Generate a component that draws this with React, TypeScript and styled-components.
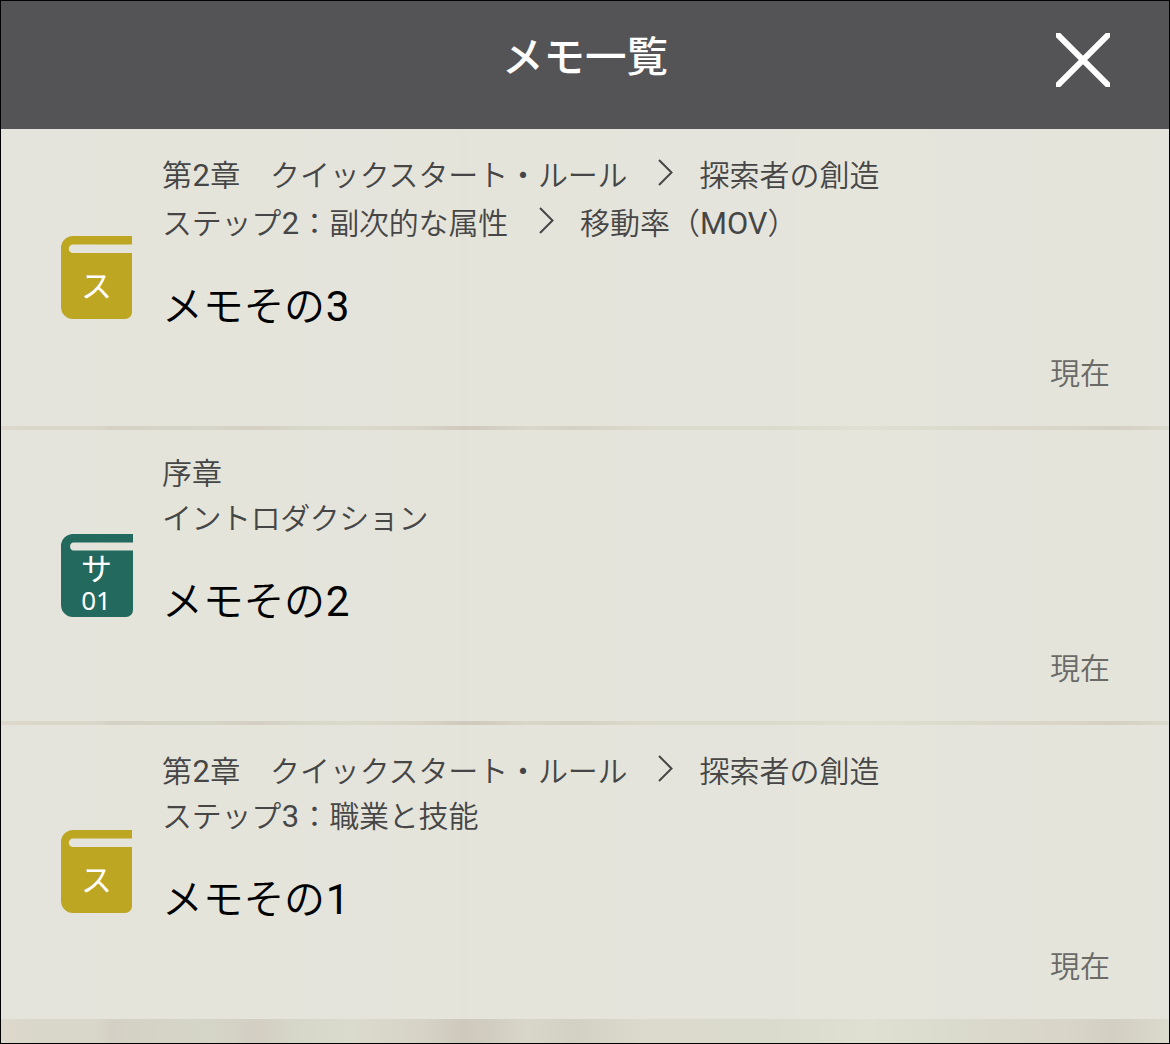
import React from "react";
import styled, { createGlobalStyle } from "styled-components";

interface Memo {
  id: number;
  book: "starter" | "supplement";
  path: string[][];
  title: string;
  time: string;
}

const memos: Memo[] = [
  {
    id: 3,
    book: "starter",
    path: [
      ["第2章　クイックスタート・ルール", "探索者の創造"],
      ["ステップ2：副次的な属性", "移動率（MOV）"],
    ],
    title: "メモその3",
    time: "現在",
  },
  {
    id: 2,
    book: "supplement",
    path: [["序章"], ["イントロダクション"]],
    title: "メモその2",
    time: "現在",
  },
  {
    id: 1,
    book: "starter",
    path: [
      ["第2章　クイックスタート・ルール", "探索者の創造"],
      ["ステップ3：職業と技能"],
    ],
    title: "メモその1",
    time: "現在",
  },
];

const tracking = (text: string) => {
  if (/^[ァ-ー]+$/.test(text)) return -0.45;
  if (/^[ァ-ー]/.test(text)) return -0.22;
  return /[ァ-ー]/.test(text) ? -0.14 : 0;
};

// digits and latin letters use their own face inside japanese text
function MixedText({ text }: { text: string }) {
  return (
    <>
      {text.split(/([0-9A-Z]+)/).map((part, i) =>
        i % 2 === 1 ? (
          <Latin key={i} $digits={/\d/.test(part)}>
            {part}
          </Latin>
        ) : (
          part
        )
      )}
    </>
  );
}

function BookIcon({ book }: { book: Memo["book"] }) {
  const isStarter = book === "starter";
  return (
    <Book viewBox="0 0 72 83">
      <path
        d={
          isStarter
            ? "M12 0H71V8.5H12A4.2 4.2 0 0 0 12 17H71V76A7 7 0 0 1 64 83H12A12 12 0 0 1 0 71V12A12 12 0 0 1 12 0Z"
            : "M12 0H72V8.5H12A4.2 4.2 0 0 0 12 16.5H72V76A7 7 0 0 1 65 83H12A12 12 0 0 1 0 71V12A12 12 0 0 1 12 0Z"
        }
        fill={isStarter ? "#bda622" : "#23695e"}
      />
      {isStarter ? (
        <BookLabel x="35.5" y="61" $size={31}>ス</BookLabel>
      ) : (
        <BookLabel x="35.5" y="46" $size={31}>
          サ
          <BookNumber x="35" y="76">01</BookNumber>
        </BookLabel>
      )}
    </Book>
  );
}

export default function App() {
  return (
    <Screen>
      <GlobalStyle />
      <Header>
        <Title>メモ一覧</Title>
        <CloseButton aria-label="閉じる">
          <svg width="54" height="54" viewBox="0 0 54 54">
            <path d="M0 0L54 54M54 0L0 54" stroke="#fff" strokeWidth="6" />
          </svg>
        </CloseButton>
      </Header>
      <List>
        {memos.map((memo) => (
          <Item key={memo.id}>
            <BookIcon book={memo.book} />
            <Body>
              {memo.path.map((line) => (
                <PathLine key={line[0]} $nested={line.length > 1}>
                  {line.map((part, i) => (
                    <React.Fragment key={part}>
                      {i > 0 && (
                        <Chevron viewBox="0 0 15 27">
                          <path d="M1 1L13.5 13.5L1 26" />
                        </Chevron>
                      )}
                      <PathPart $tracking={tracking(part)}>
                        <MixedText text={part} />
                      </PathPart>
                    </React.Fragment>
                  ))}
                </PathLine>
              ))}
              <MemoTitle>
                <MixedText text={memo.title} />
              </MemoTitle>
              <Time>{memo.time}</Time>
            </Body>
          </Item>
        ))}
      </List>
    </Screen>
  );
}

const GlobalStyle = createGlobalStyle`
  * {
    box-sizing: border-box;
  }
  body {
    margin: 0;
    font-family: Inter, "Noto Sans CJK JP", sans-serif;
  }
`;

const Screen = styled.div`
  display: flex;
  flex-direction: column;
  width: 1170px;
  height: 1044px;
  overflow: hidden;
  border: 1px solid #000;
  background: linear-gradient(
    90deg,
    #ddd8cb 0%,
    #d8d7ca 4%,
    #d8d7ca 8%,
    #d5d0c5 9.5%,
    #d4d3c6 12%,
    #d5d5c8 18%,
    #d4cec3 22%,
    #d6d6c9 25%,
    #dadacd 30%,
    #d7d4c7 36%,
    #cfc9bd 39.5%,
    #d2cdc1 42%,
    #d8d7c9 45%,
    #d3d1c4 49%,
    #dbdacd 55%,
    #dadacd 66%,
    #dfe0d2 74%,
    #dadacd 82%,
    #d9d4c8 92%,
    #d3cfc2 95%,
    #dadacd 100%
  );
`;

const Header = styled.header`
  display: grid;
  grid-template-columns: 1fr auto 1fr;
  height: 128px;
  padding: 32px 59px 0;
  background: #545456;
  color: #fff;
`;

const Title = styled.h1`
  grid-column: 2;
  margin: 0;
  font-size: 41.5px;
  font-weight: 500;
  line-height: 48px;
`;

const CloseButton = styled.button`
  justify-self: end;
  width: 54px;
  height: 54px;
  padding: 0;
  border: 0;
  background: none;

  svg {
    display: block;
  }
`;

const List = styled.div`
  display: flex;
  flex-direction: column;
  gap: 4px;
`;

const Item = styled.article`
  display: flex;
  align-items: center;
  padding: 20px 59px 0 60px;
  background: rgba(229, 229, 220, 0.95);
`;

const Book = styled.svg`
  flex: none;
  width: 72px;
  height: 83px;
  margin: -20.5px 29px 0 0;
`;

const BookLabel = styled.text<{ $size: number }>`
  fill: #fff;
  font-family: "Noto Sans CJK JP", sans-serif;
  font-size: ${({ $size }) => $size}px;
  text-anchor: middle;
`;

const BookNumber = styled.tspan`
  font-family: "Noto Sans", sans-serif;
  font-size: 26px;
  font-weight: 400;
`;

const Body = styled.div`
  flex: 1;
  padding-top: 1px;
`;

const PathLine = styled.div<{ $nested: boolean }>`
  display: flex;
  align-items: center;
  height: ${({ $nested }) => ($nested ? 48 : 45)}px;
  padding-top: ${({ $nested }) => ($nested ? 3 : 0)}px;
  color: #464646;
  font-size: 30px;
  font-weight: 350;
  line-height: 45px;
  white-space: nowrap;
`;

const PathPart = styled.span<{ $tracking: number }>`
  letter-spacing: ${({ $tracking }) => $tracking}px;
`;

const Latin = styled.span<{ $digits: boolean }>`
  margin: 0 ${({ $digits }) => ($digits ? "0.02em" : 0)};
  font-family: Roboto, sans-serif;
  font-size: 1.03em;
  font-weight: 400;
  line-height: 1;
`;

const Chevron = styled.svg`
  width: 15px;
  height: 27px;
  margin: -6px 26px 0 31px;
  fill: none;
  stroke: #464646;
  stroke-width: 2;
`;

const MemoTitle = styled.h2`
  height: 63px;
  margin: 28px 0 0;
  color: #000;
  font-size: 41px;
  font-weight: 350;
  letter-spacing: -0.3px;
  line-height: 64px;
`;

const Time = styled.time`
  display: block;
  margin-top: 13px;
  height: 76px;
  color: #6a6a67;
  font-size: 30px;
  font-weight: 350;
  line-height: 46px;
  text-align: right;
`;
